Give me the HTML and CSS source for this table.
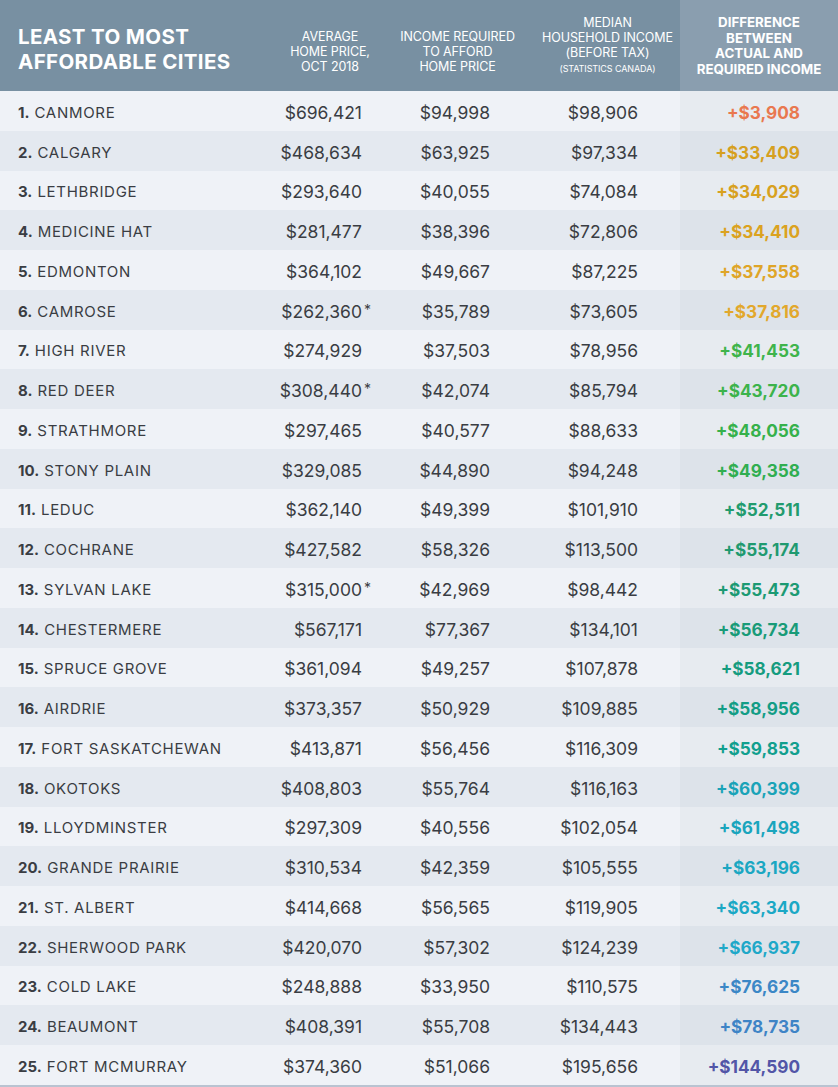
FILE: index.html
```html
<!DOCTYPE html>
<html lang="en">
<head>
<meta charset="utf-8">
<title>Least to Most Affordable Cities</title>
<link rel="stylesheet" href="styles.css">
</head>
<body>
<div class="table">
  <div class="head">
    <div class="h-title">LEAST TO MOST<br>AFFORDABLE CITIES</div>
    <div class="h-col h-price">AVERAGE<br>HOME PRICE,<br>OCT 2018</div>
    <div class="h-col h-req">INCOME REQUIRED<br>TO AFFORD<br>HOME PRICE</div>
    <div class="h-col h-med">MEDIAN<br>HOUSEHOLD INCOME<br>(BEFORE TAX)<br><span class="h-small">(STATISTICS CANADA)</span></div>
    <div class="h-col h-diff">DIFFERENCE<br>BETWEEN<br>ACTUAL AND<br>REQUIRED INCOME</div>
  </div>
  <div class="body">
    <div class="row"><div class="city"><b>1.</b> CANMORE</div><div class="price">$696,421</div><div class="req">$94,998</div><div class="med">$98,906</div><div class="diff c1">+$3,908</div></div>
    <div class="row"><div class="city"><b>2.</b> CALGARY</div><div class="price">$468,634</div><div class="req">$63,925</div><div class="med">$97,334</div><div class="diff c2">+$33,409</div></div>
    <div class="row"><div class="city"><b>3.</b> LETHBRIDGE</div><div class="price">$293,640</div><div class="req">$40,055</div><div class="med">$74,084</div><div class="diff c3">+$34,029</div></div>
    <div class="row"><div class="city"><b>4.</b> MEDICINE HAT</div><div class="price">$281,477</div><div class="req">$38,396</div><div class="med">$72,806</div><div class="diff c4">+$34,410</div></div>
    <div class="row"><div class="city"><b>5.</b> EDMONTON</div><div class="price">$364,102</div><div class="req">$49,667</div><div class="med">$87,225</div><div class="diff c5">+$37,558</div></div>
    <div class="row"><div class="city"><b>6.</b> CAMROSE</div><div class="price">$262,360<span class="ast">*</span></div><div class="req">$35,789</div><div class="med">$73,605</div><div class="diff c6">+$37,816</div></div>
    <div class="row"><div class="city"><b>7.</b> HIGH RIVER</div><div class="price">$274,929</div><div class="req">$37,503</div><div class="med">$78,956</div><div class="diff c7">+$41,453</div></div>
    <div class="row"><div class="city"><b>8.</b> RED DEER</div><div class="price">$308,440<span class="ast">*</span></div><div class="req">$42,074</div><div class="med">$85,794</div><div class="diff c8">+$43,720</div></div>
    <div class="row"><div class="city"><b>9.</b> STRATHMORE</div><div class="price">$297,465</div><div class="req">$40,577</div><div class="med">$88,633</div><div class="diff c9">+$48,056</div></div>
    <div class="row"><div class="city"><b>10.</b> STONY PLAIN</div><div class="price">$329,085</div><div class="req">$44,890</div><div class="med">$94,248</div><div class="diff c10">+$49,358</div></div>
    <div class="row"><div class="city"><b>11.</b> LEDUC</div><div class="price">$362,140</div><div class="req">$49,399</div><div class="med">$101,910</div><div class="diff c11">+$52,511</div></div>
    <div class="row"><div class="city"><b>12.</b> COCHRANE</div><div class="price">$427,582</div><div class="req">$58,326</div><div class="med">$113,500</div><div class="diff c12">+$55,174</div></div>
    <div class="row"><div class="city"><b>13.</b> SYLVAN LAKE</div><div class="price">$315,000<span class="ast">*</span></div><div class="req">$42,969</div><div class="med">$98,442</div><div class="diff c13">+$55,473</div></div>
    <div class="row"><div class="city"><b>14.</b> CHESTERMERE</div><div class="price">$567,171</div><div class="req">$77,367</div><div class="med">$134,101</div><div class="diff c14">+$56,734</div></div>
    <div class="row"><div class="city"><b>15.</b> SPRUCE GROVE</div><div class="price">$361,094</div><div class="req">$49,257</div><div class="med">$107,878</div><div class="diff c15">+$58,621</div></div>
    <div class="row"><div class="city"><b>16.</b> AIRDRIE</div><div class="price">$373,357</div><div class="req">$50,929</div><div class="med">$109,885</div><div class="diff c16">+$58,956</div></div>
    <div class="row"><div class="city"><b>17.</b> FORT SASKATCHEWAN</div><div class="price">$413,871</div><div class="req">$56,456</div><div class="med">$116,309</div><div class="diff c17">+$59,853</div></div>
    <div class="row"><div class="city"><b>18.</b> OKOTOKS</div><div class="price">$408,803</div><div class="req">$55,764</div><div class="med">$116,163</div><div class="diff c18">+$60,399</div></div>
    <div class="row"><div class="city"><b>19.</b> LLOYDMINSTER</div><div class="price">$297,309</div><div class="req">$40,556</div><div class="med">$102,054</div><div class="diff c19">+$61,498</div></div>
    <div class="row"><div class="city"><b>20.</b> GRANDE PRAIRIE</div><div class="price">$310,534</div><div class="req">$42,359</div><div class="med">$105,555</div><div class="diff c20">+$63,196</div></div>
    <div class="row"><div class="city"><b>21.</b> ST. ALBERT</div><div class="price">$414,668</div><div class="req">$56,565</div><div class="med">$119,905</div><div class="diff c21">+$63,340</div></div>
    <div class="row"><div class="city"><b>22.</b> SHERWOOD PARK</div><div class="price">$420,070</div><div class="req">$57,302</div><div class="med">$124,239</div><div class="diff c22">+$66,937</div></div>
    <div class="row"><div class="city"><b>23.</b> COLD LAKE</div><div class="price">$248,888</div><div class="req">$33,950</div><div class="med">$110,575</div><div class="diff c23">+$76,625</div></div>
    <div class="row"><div class="city"><b>24.</b> BEAUMONT</div><div class="price">$408,391</div><div class="req">$55,708</div><div class="med">$134,443</div><div class="diff c24">+$78,735</div></div>
    <div class="row"><div class="city"><b>25.</b> FORT MCMURRAY</div><div class="price">$374,360</div><div class="req">$51,066</div><div class="med">$195,656</div><div class="diff c25">+$144,590</div></div>
  </div>
</div>
</body>
</html>
```
FILE: styles.css
```css
* { box-sizing: border-box; }
html, body { margin: 0; padding: 0; background: #ffffff; }
body { width: 838px; height: 1087px; overflow: hidden; font-family: Inter, "Noto Sans", "Liberation Sans", sans-serif; color: #3a3d43; }

.table { width: 838px; }

.head {
  display: grid;
  grid-template-columns: 270px 120px 135px 155px 158px;
  height: 91px;
  background: #7890a2;
  color: #ffffff;
  align-items: center;
}
.h-title {
  padding: 6px 0 0 18px;
  font-size: 20.5px;
  font-weight: 700;
  line-height: 25px;
  letter-spacing: 0.35px;
}
.h-col {
  text-align: center;
  font-size: 12.5px;
  line-height: 15px;
  font-weight: 400;
  letter-spacing: -0.1px;
  white-space: nowrap;
}
.h-price, .h-req { padding-top: 12px; }
.h-med { padding-left: 10px; }
.h-small { font-size: 9px; }
.h-diff {
  align-self: stretch;
  display: flex;
  align-items: center;
  justify-content: center;
  background: #8a9eaf;
  font-weight: 700;
  font-size: 13.3px;
  line-height: 15.5px;
  letter-spacing: 0;
  padding-top: 1px;
}

.body { border-bottom: 2px solid #b9c3d1; }
.row {
  display: grid;
  grid-template-columns: 260px 115px 125px 180px 158px;
  height: 39.75px;
  align-items: center;
  background: #eff2f7;
  font-size: 17.5px;
}
.row:nth-child(even) { background: #e4e9f0; }
.row > div { height: 100%; display: flex; align-items: center; padding-top: 3px; }
.city {
  padding-left: 18px;
  font-size: 15px;
  letter-spacing: 0.7px;
  white-space: nowrap;
}
.city b { font-weight: 700; margin-right: 5px; letter-spacing: 0; }
.price, .req, .med, .diff { justify-content: flex-end; }
.price { padding-right: 13px; position: relative; }
.req { padding-right: 10px; }
.med { padding-right: 42px; }
.diff {
  padding-right: 38px;
  font-weight: 700;
  font-size: 17.2px;
  letter-spacing: 0;
  background: #e7ebf0;
}
.row:nth-child(even) .diff { background: #dde3ea; }
.ast { position: absolute; left: 104px; top: 11px; font-size: 14px; }

.c1 { color: #e9784f; }
.c2 { color: #d6a01f; }
.c3 { color: #d8a11f; }
.c4 { color: #dba220; }
.c5 { color: #dfa528; }
.c6 { color: #e2a82c; }
.c7 { color: #3fb44b; }
.c8 { color: #3cb34b; }
.c9 { color: #36b14b; }
.c10 { color: #30ae50; }
.c11 { color: #229b6e; }
.c12 { color: #1f9a70; }
.c13 { color: #1c9a73; }
.c14 { color: #199b78; }
.c15 { color: #169c7f; }
.c16 { color: #139d86; }
.c17 { color: #119f8e; }
.c18 { color: #1aa3b8; }
.c19 { color: #1aa5bd; }
.c20 { color: #1ba7c2; }
.c21 { color: #1ba8c5; }
.c22 { color: #1fa8c8; }
.c23 { color: #3b87c6; }
.c24 { color: #3e84c6; }
.c25 { color: #5255a7; }
```
